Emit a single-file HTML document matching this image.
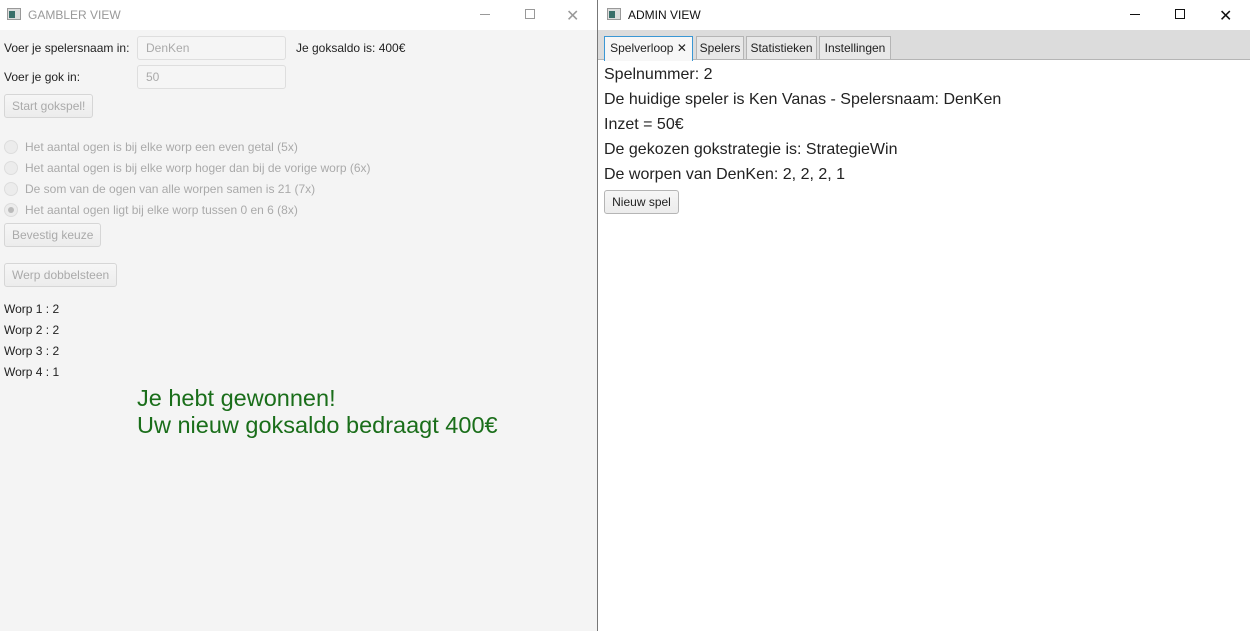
<!DOCTYPE html>
<html><head><meta charset="utf-8"><style>
*{box-sizing:border-box;margin:0;padding:0}
body{width:1250px;height:631px;position:relative;overflow:hidden;background:#f4f4f4;font-family:"Liberation Sans",sans-serif;}
.a{position:absolute;white-space:nowrap}
.l{font-size:12px;color:#222}
.dis{color:#aaa}
.btn{position:absolute;border:1px solid #d6d6d6;border-radius:3px;background:linear-gradient(#f6f6f6,#ececec);font-size:12px;color:#aaa;padding:0 7px;line-height:22px;height:24px}
.tf{position:absolute;border:1px solid #dedede;border-radius:3px;background:#f5f5f5;font-size:12px;color:#aaa;padding-left:8px;line-height:22px;height:24px;width:149px}
.rad{position:absolute;width:14px;height:14px;border-radius:50%;border:1px solid #ddd;background:#ececec}
.r{font-size:16px;color:#222}
.tab{position:absolute;top:36px;height:23px;border:1px solid #b5b5b5;border-bottom:none;background:#e8e8e8;font-size:12px;color:#222;line-height:22px;text-align:center}
</style></head><body>
<div class="a" style="left:0;top:0;width:597px;height:30px;background:#fff"></div>
<svg class="a" style="left:7px;top:8px" width="14" height="12"><rect x="0.5" y="0.5" width="13" height="11" fill="#ddd" stroke="#999"/><rect x="2" y="3" width="6" height="7" fill="#3a6f6a"/></svg>
<div class="a" style="left:28px;top:8px;font-size:12px;color:#999">GAMBLER VIEW</div>
<div class="a" style="left:480px;top:14px;width:10px;height:1px;background:#999"></div>
<div class="a" style="left:525px;top:9px;width:10px;height:10px;border:1px solid #999"></div>
<div class="a" style="left:566px;top:6px;font-size:16px;color:#999">✕</div>

<div class="a l" style="left:4px;top:41px">Voer je spelersnaam in:</div>
<div class="tf" style="left:137px;top:36px">DenKen</div>
<div class="a l" style="left:296px;top:41px">Je goksaldo is: 400€</div>
<div class="a l" style="left:4px;top:70px">Voer je gok in:</div>
<div class="tf" style="left:137px;top:65px">50</div>
<div class="btn" style="left:4px;top:94px">Start gokspel!</div>

<div class="rad" style="left:4px;top:140px"></div><div class="a l dis" style="left:25px;top:140px">Het aantal ogen is bij elke worp een even getal (5x)</div>
<div class="rad" style="left:4px;top:161px"></div><div class="a l dis" style="left:25px;top:161px">Het aantal ogen is bij elke worp hoger dan bij de vorige worp (6x)</div>
<div class="rad" style="left:4px;top:182px"></div><div class="a l dis" style="left:25px;top:182px">De som van de ogen van alle worpen samen is 21 (7x)</div>
<div class="rad" style="left:4px;top:203px"></div><div class="a" style="left:8px;top:207px;width:6px;height:6px;border-radius:50%;background:#bbb"></div><div class="a l dis" style="left:25px;top:203px">Het aantal ogen ligt bij elke worp tussen 0 en 6 (8x)</div>
<div class="btn" style="left:4px;top:223px">Bevestig keuze</div>
<div class="btn" style="left:4px;top:263px">Werp dobbelsteen</div>

<div class="a l" style="left:4px;top:302px">Worp 1 : 2</div>
<div class="a l" style="left:4px;top:323px">Worp 2 : 2</div>
<div class="a l" style="left:4px;top:344px">Worp 3 : 2</div>
<div class="a l" style="left:4px;top:365px">Worp 4 : 1</div>
<div class="a" style="left:137px;top:385px;font-size:23.5px;line-height:27px;color:#1a6e1a">Je hebt gewonnen!<br>Uw nieuw goksaldo bedraagt 400€</div>

<div class="a" style="left:597px;top:0;width:653px;height:631px;background:#fff;border-left:1px solid #777"></div>
<svg class="a" style="left:607px;top:8px" width="14" height="12"><rect x="0.5" y="0.5" width="13" height="11" fill="#ddd" stroke="#999"/><rect x="2" y="3" width="6" height="7" fill="#3a6f6a"/></svg>
<div class="a" style="left:628px;top:8px;font-size:12px;color:#111">ADMIN VIEW</div>
<div class="a" style="left:1130px;top:14px;width:10px;height:1px;background:#111"></div>
<div class="a" style="left:1175px;top:9px;width:10px;height:10px;border:1px solid #111"></div>
<div class="a" style="left:1219px;top:6px;font-size:16px;color:#111">✕</div>
<div class="a" style="left:598px;top:30px;width:652px;height:30px;background:#dcdcdc;border-bottom:1px solid #b5b5b5"></div>
<div class="tab" style="left:604px;width:89px;background:#f7f7f7;border-color:#3a97d4;height:25px">Spelverloop ✕</div>
<div class="tab" style="left:696px;width:48px">Spelers</div>
<div class="tab" style="left:746px;width:71px">Statistieken</div>
<div class="tab" style="left:819px;width:72px">Instellingen</div>

<div class="a r" style="left:604px;top:66px">Spelnummer: 2</div>
<div class="a r" style="left:604px;top:91px">De huidige speler is Ken Vanas - Spelersnaam: DenKen</div>
<div class="a r" style="left:604px;top:116px">Inzet = 50€</div>
<div class="a r" style="left:604px;top:141px">De gekozen gokstrategie is: StrategieWin</div>
<div class="a r" style="left:604px;top:166px">De worpen van DenKen: 2, 2, 2, 1</div>
<div class="btn" style="left:604px;top:190px;color:#222;border-color:#b5b5b5;height:24px;width:75px;padding:0;text-align:center">Nieuw spel</div>
</body></html>
